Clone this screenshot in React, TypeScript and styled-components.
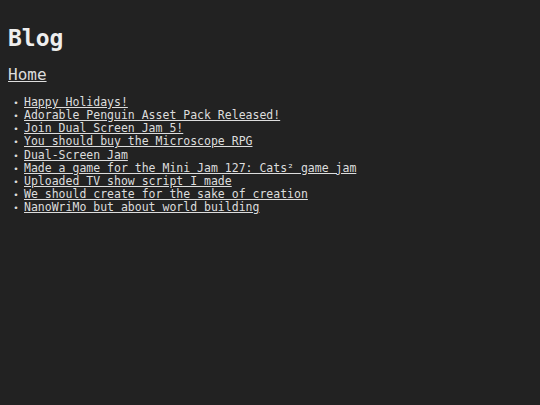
import styled, { createGlobalStyle } from "styled-components"

const GlobalStyle = createGlobalStyle`
    html, body {
        background-color: #222222;
    }
    body {
        margin: 8px;
        color: #dddddd;
        font-family: "DejaVu Sans Mono", monospace;
        font-size: 11.5px;
    }
`

const Title = styled.h1`
    font-size: 23px;
    font-weight: bold;
    margin: 17px 0 14px;
    color: #eeeeee;
`

const HomeLink = styled.a`
    display: block;
    font-size: 16px;
    color: #dddddd;
    text-decoration: underline;
`

const Posts = styled.ul`
    margin: 12px 0 0;
    padding-left: 16px;
    line-height: 13.125px;
    list-style: none;
`

const Post = styled.li`
    &::before {
        content: "•";
        display: inline-block;
        width: 16px;
        margin-left: -16px;
        text-align: center;
        font-size: 9px;
        line-height: 0;
    }
    a {
        color: #dddddd;
        text-decoration: underline;
    }
`

const posts = [
    "Happy Holidays!",
    "Adorable Penguin Asset Pack Released!",
    "Join Dual Screen Jam 5!",
    "You should buy the Microscope RPG",
    "Dual-Screen Jam",
    "Made a game for the Mini Jam 127: Cats² game jam",
    "Uploaded TV show script I made",
    "We should create for the sake of creation",
    "NanoWriMo but about world building",
]

export default function App() {
    return <>
        <GlobalStyle />
        <Title>Blog</Title>
        <HomeLink href="#">Home</HomeLink>
        <Posts>
            {posts.map(p => <Post key={p}><a href="#">{p}</a></Post>)}
        </Posts>
    </>
}
